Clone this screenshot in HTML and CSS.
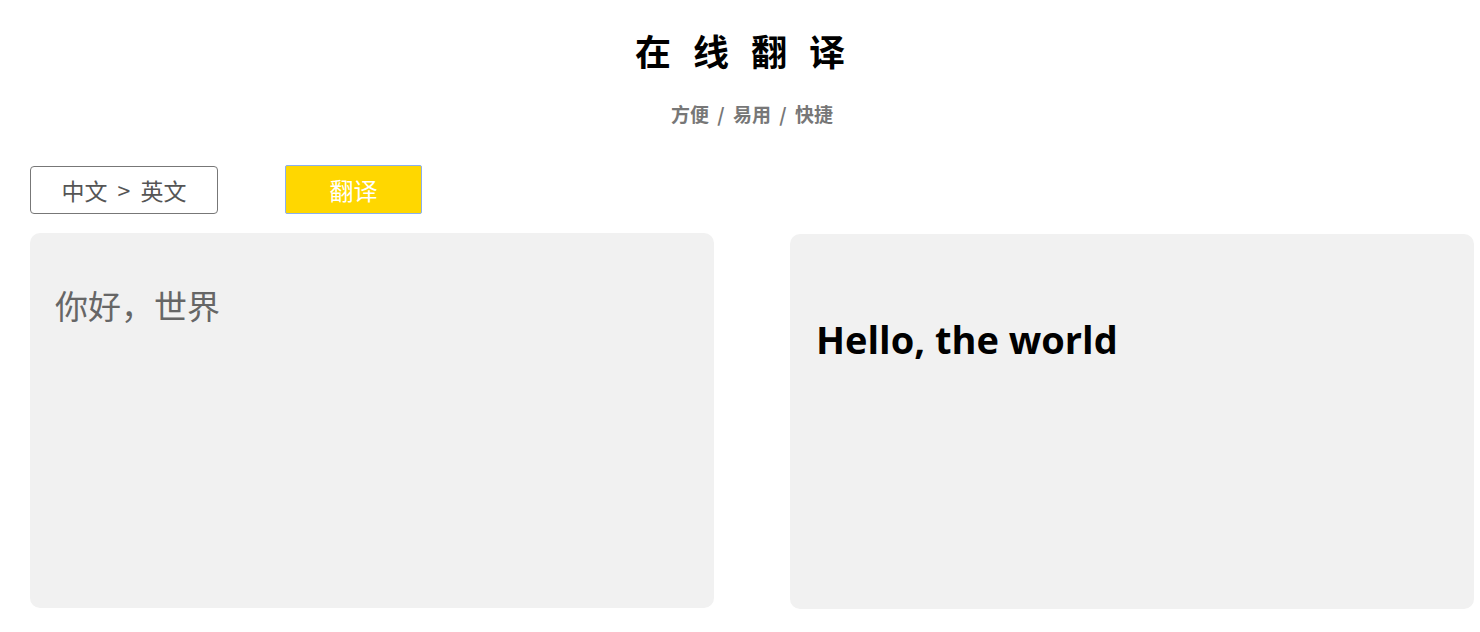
FILE: index.html
```html
<!DOCTYPE html>
<html lang="zh">
<head>
<meta charset="utf-8">
<title>在线翻译</title>
<link rel="stylesheet" href="styles.css">
</head>
<body>
<header class="header">
  <h1 class="title">在线翻译</h1>
  <p class="subtitle">方便 / 易用 / 快捷</p>
</header>
<div class="toolbar">
  <button class="lang-btn">中文 &gt; 英文</button>
  <button class="go-btn">翻译</button>
</div>
<main class="panels">
  <div class="panel panel-input">你好，世界</div>
  <div class="panel panel-output">Hello, the world</div>
</main>
</body>
</html>
```
FILE: styles.css
```css
* { box-sizing: border-box; }
body {
  margin: 0;
  font-family: "Noto Sans CJK SC", "Noto Sans", sans-serif;
  background: #fff;
  color: #000;
}
.header {
  text-align: center;
  padding-top: 30px;
}
.title {
  margin: 0;
  font-size: 36px;
  line-height: 40px;
  font-weight: 700;
  letter-spacing: 22px;
  padding-left: 22px;
}
.subtitle {
  margin: 32px 0 0;
  padding-left: 24px;
  font-size: 19px;
  line-height: 24px;
  font-weight: 700;
  color: #777;
  word-spacing: 4px;
}
.toolbar {
  display: flex;
  align-items: flex-start;
  gap: 67px;
  padding-left: 30px;
  margin-top: 39px;
}
.lang-btn {
  width: 188px;
  height: 48px;
  margin-top: 1px;
  border: 1px solid #777;
  border-radius: 4px;
  background: #fff;
  color: #555;
  font-family: inherit;
  font-size: 23px;
  word-spacing: 5px;
  padding: 0;
}
.go-btn {
  width: 137px;
  height: 49px;
  border: 1px solid #8ab0f0;
  border-radius: 2px;
  background: #ffd700;
  color: #fff;
  font-family: inherit;
  font-size: 24px;
  padding: 0;
}
.panels {
  display: grid;
  grid-template-columns: 684px 684px;
  gap: 76px;
  align-items: start;
  padding-left: 30px;
  margin-top: 19px;
}
.panel {
  height: 375px;
  background: #f1f1f1;
  border-radius: 10px;
}
.panel-input {
  padding: 47px 25px;
  font-size: 33px;
  line-height: 50px;
  color: #666;
}
.panel-output {
  margin-top: 1px;
  padding: 81px 26px;
  font-family: "Open Sans", sans-serif;
  font-weight: 700;
  font-size: 38px;
  line-height: 48px;
  color: #000;
}
```
